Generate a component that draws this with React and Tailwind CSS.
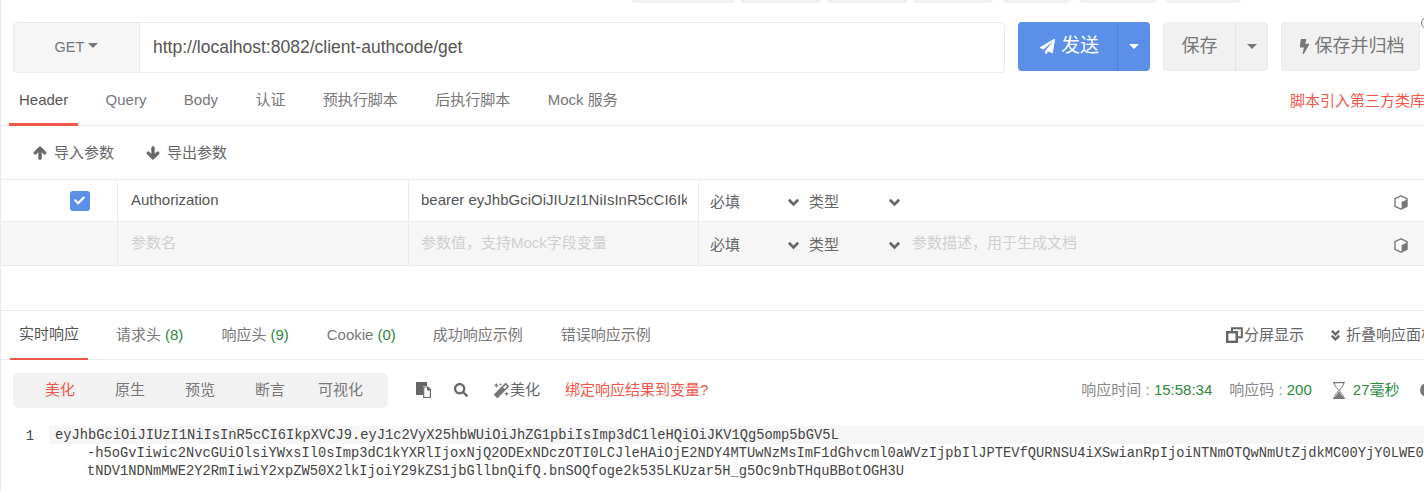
import React from "react";
import { FaPaperPlane, FaBolt, FaArrowUp, FaArrowDown, FaCheck, FaAngleDown, FaSearch, FaMagic, FaAngleDoubleDown } from "react-icons/fa";

const Caret = ({ className }) => (
  <span className={"inline-block w-0 h-0 border-x-[5px] border-x-transparent border-t-[5px] " + className} />
);

const reqTabs = ["Query", "Body", "认证", "预执行脚本", "后执行脚本", "Mock 服务"];

const Green = ({ children }) => <span className="text-[#2b8a3e]">{children}</span>;

const Cube = () => (
  <svg viewBox="0 0 14 15" className="w-[14px] h-[15px] mr-[16px] shrink-0">
    <path d="M7 .8 13 3.6v7.8L7 14.2 1 11.4V3.6Z" fill="#fff" stroke="#777" strokeWidth="1.4" strokeLinejoin="round" />
    <path d="M7.6 7 13 4.4v6.8l-5.4 2.6Z" fill="#777" />
  </svg>
);

const SplitIcon = () => (
  <svg viewBox="0 0 17 16" className="w-[17px] h-[16px] mr-[1px] shrink-0">
    <path d="M6 5V1.2h9.8v9H11" fill="none" stroke="#666" strokeWidth="2" />
    <rect x="1.2" y="5.2" width="9.6" height="9.6" fill="none" stroke="#666" strokeWidth="2.4" />
  </svg>
);

const Hourglass = () => (
  <svg viewBox="0 0 14 17" className="w-[14px] h-[17px] ml-[20px] mr-[7px] shrink-0">
    <path d="M1 .6h12M1 16.4h12" stroke="#777" strokeWidth="1.4" />
    <path d="M2.4 1c0 4 4 5.500 4 7.500S2.400 12 2.400 16M11.600 1c0 4-4 5.500-4 7.500s4 3.500 4 7.500" fill="none" stroke="#777" strokeWidth="1" />
    <path d="M7 9.500 2.400 16h9.200Z" fill="#777" />
  </svg>
);

const PasteIcon = () => (
  <svg viewBox="0 0 15 16" className="w-[15px] h-[16px] ml-[28px] shrink-0">
    <path d="M0 0h11v4H7v9H0Z" fill="#666" />
    <path d="M7.700 5H12l2.500 2.500v8H7.700Z" fill="#fff" stroke="#666" strokeWidth="1.200" />
    <path d="M11.500 5v3h3" fill="#666" stroke="#666" />
  </svg>
);

function ParamRow({ name, value, desc, placeholder, checked, shaded }) {
  const text = placeholder ? "text-[#d0d0d0]" : "text-[#555]";
  return (
    <div className={"flex border-b border-[#ebebeb] shrink-0 " + (shaded ? "h-[44px] bg-[#f6f6f6]" : "h-[42px] bg-white")}>
      <div className="w-[117px] shrink-0 border-r border-[#ebebeb] flex items-center justify-center pl-[43px]">
        {checked && (
          <span className="w-[20px] h-[20px] rounded-[3px] bg-[#5b8fe8] flex items-center justify-center text-white text-[11px] mr-[2px]">
            <FaCheck />
          </span>
        )}
      </div>
      <div className={"w-[291px] shrink-0 border-r border-[#ebebeb] pl-[13px] flex items-center " + text}>{name}</div>
      <div className={"w-[290px] shrink-0 border-r border-[#ebebeb] pl-[12px] pr-[11px] flex items-center whitespace-nowrap " + text}>
        <span className="overflow-hidden min-w-0">{value}</span>
      </div>
      <div className={"flex-1 flex items-center pl-[11px] text-[#666] " + (shaded ? "pt-[3px]" : "pt-[4px]")}>
        <span className="w-[77px]">必填</span>
        <FaAngleDown className="text-[17px] text-[#666] w-[13px] shrink-0" />
        <span className="ml-[9px] w-[79px]">类型</span>
        <FaAngleDown className="text-[17px] text-[#666] w-[13px] shrink-0" />
        <span className="ml-[11px] text-[#d0d0d0] flex-1 -mt-[3px]">{desc}</span>
        <Cube />
      </div>
    </div>
  );
}

export default function App() {
  return (
    <div
      className="w-[1424px] h-[491px] overflow-hidden bg-white border-l border-[#ebebeb] flex flex-col text-[15px] text-[#666]"
      style={{ fontFamily: '"Liberation Sans", "Noto Sans CJK SC", sans-serif' }}
    >
      {/* strip of cut-off buttons */}
      <div className="h-[3px] flex pl-[631px] shrink-0">
        <div className="w-[103px] bg-[#f1f1f1] rounded-b-[3px]" />
        <div className="w-[80px] ml-[6px] bg-[#f1f1f1] rounded-b-[3px]" />
        <div className="w-[80px] ml-[6px] bg-[#f1f1f1] rounded-b-[3px]" />
        <div className="w-[80px] ml-[6px] bg-[#f1f1f1] rounded-b-[3px]" />
        <div className="w-[67px] ml-[10px] bg-[#f1f1f1] rounded-b-[3px]" />
        <div className="w-[77px] ml-[9px] bg-[#f1f1f1] rounded-b-[3px]" />
        <div className="w-[75px] ml-[10px] bg-[#f1f1f1] rounded-b-[3px]" />
      </div>

      {/* URL bar */}
      <div className="flex mt-[19px] h-[51px] pl-[12px] shrink-0 relative">
        <div className="w-[992px] h-[51px] flex border border-[#ebebeb] rounded-[4px] overflow-hidden">
          <div className="w-[126px] bg-[#f6f6f6] border-r border-[#ebebeb] flex items-center justify-center gap-[4px] text-[14.5px] text-[#777]">
            GET <Caret className="border-t-[#777] mb-[4px]" />
          </div>
          <div className="flex-1 pl-[13px] flex items-center text-[17.5px] text-[#555]">
            http://localhost:8082/client-authcode/get
          </div>
        </div>
        <div className="ml-[13px] w-[132px] h-[49px] flex rounded-[4px] bg-[#5b8fe8] text-white">
          <div className="w-[100px] flex items-center justify-center gap-[6px] text-[19px] border-r border-[#5283d6] pl-[4px]">
            <FaPaperPlane className="text-[15px]" /> 发送
          </div>
          <div className="flex-1 flex items-center justify-center">
            <Caret className="border-t-white" />
          </div>
        </div>
        <div className="ml-[13px] w-[105px] h-[49px] flex rounded-[4px] bg-[#f1f1f1] border border-[#ebebeb] text-[#777]">
          <div className="w-[72px] flex items-center justify-center text-[18px] border-r border-[#e3e3e3]">保存</div>
          <div className="flex-1 flex items-center justify-center">
            <Caret className="border-t-[#777]" />
          </div>
        </div>
        <div className="ml-[13px] w-[139px] h-[49px] flex items-center justify-center gap-[3px] rounded-[4px] bg-[#f1f1f1] border border-[#ebebeb] text-[#777] text-[18px]">
          <FaBolt className="text-[15px]" /> 保存并归档
        </div>
        <span className="absolute left-[1420px] -top-[5px] w-[12px] h-[12px] rounded-full border border-[#777]" />
      </div>

      {/* request tabs */}
      <div className="h-[53px] border-b border-[#ebebeb] flex items-stretch pl-[8px] shrink-0 whitespace-nowrap">
        <div className="px-[10px] flex items-center text-[#555] border-b-[3px] border-[#f1574a] -mb-px pt-[5px]">Header</div>
        {reqTabs.map((t) => (
          <div key={t} className="ml-[17.4px] px-[10px] flex items-center text-[#777] pt-[3px]">{t}</div>
        ))}
        <div className="ml-auto flex items-center text-[#f1574a] -mr-[1px] pt-[5px]">脚本引入第三方类库</div>
      </div>

      {/* import/export */}
      <div className="h-[53px] flex items-center pl-[32px] pt-[1px] shrink-0 text-[#666]">
        <FaArrowUp className="text-[14px] mr-[7px] stroke-[40px]" /> 导入参数
        <FaArrowDown className="text-[14px] ml-[32px] mr-[7px] stroke-[40px]" /> 导出参数
      </div>

      {/* table */}
      <div className="border-t border-[#ebebeb] flex flex-col shrink-0">
        <ParamRow name="Authorization" value="bearer eyJhbGciOiJIUzI1NiIsInR5cCI6Ik" checked />
        <ParamRow name="参数名" value="参数值，支持Mock字段变量" desc="参数描述，用于生成文档" placeholder shaded />
      </div>

      {/* response tabs */}
      <div className="mt-[44px] h-[50px] border-t border-b border-[#ebebeb] flex items-stretch pl-[9px] shrink-0 whitespace-nowrap">
        <div className="px-[9px] flex items-center text-[#555] border-b-[2px] border-[#f1574a] -mb-px">实时响应</div>
        <div className="ml-[19px] px-[9px] flex items-center text-[#777] gap-[4px]">请求头 <Green>(8)</Green></div>
        <div className="ml-[20px] px-[9px] flex items-center text-[#777] gap-[4px]">响应头 <Green>(9)</Green></div>
        <div className="ml-[20px] px-[9px] flex items-center text-[#777] gap-[4px]">Cookie <Green>(0)</Green></div>
        <div className="ml-[19px] px-[9px] flex items-center text-[#777]">成功响应示例</div>
        <div className="ml-[20px] px-[9px] flex items-center text-[#777]">错误响应示例</div>
        <div className="ml-auto flex items-center text-[#666] -mr-[12px]">
          <SplitIcon /> 分屏显示
          <FaAngleDoubleDown className="text-[13px] ml-[25px] mr-[4px] stroke-[20px]" /> 折叠响应面板
        </div>
      </div>

      {/* response toolbar */}
      <div className="mt-[12px] flex items-center h-[36px] pl-[12px] shrink-0 whitespace-nowrap">
        <div className="w-[375px] h-[35px] shrink-0 rounded-[5px] bg-[#f2f2f2] flex items-center pl-[32px] text-[#777]">
          <span className="text-[#f1574a] w-[70px]">美化</span>
          <span className="w-[70px]">原生</span>
          <span className="w-[70px]">预览</span>
          <span className="w-[63px]">断言</span>
          <span>可视化</span>
        </div>
        <PasteIcon />
        <FaSearch className="ml-[23px] text-[14px] text-[#666] shrink-0" />
        <FaMagic className="ml-[26px] text-[15px] text-[#777] shrink-0" />
        <span className="ml-[1px] text-[#666]">美化</span>
        <span className="ml-[25px] text-[#f1574a]">绑定响应结果到变量?</span>
        <div className="ml-[373px] flex items-center text-[#888] shrink-0">
          <span>响应时间 :&nbsp;</span>
          <Green>15:58:34</Green>
          <span className="ml-[17px]">响应码 :&nbsp;</span>
          <Green>200</Green>
          <Hourglass />
          <Green>27毫秒</Green>
          <span className="ml-[20px] w-[14px] h-[14px] rounded-full bg-[#777] shrink-0" />
        </div>
      </div>

      {/* code */}
      <div
        className="mt-[18px] flex text-[13.75px] leading-[18px] text-[#444]"
        style={{ fontFamily: '"Liberation Mono", monospace' }}
      >
        <div className="w-[48px] shrink-0 text-right pr-[15px] pt-[2px]">1</div>
        <div className="flex-1 min-w-0 whitespace-nowrap overflow-hidden">
          <div className="bg-[#f6f6f6] pl-[6px] pt-[1px] h-[18px] leading-[17px]">eyJhbGciOiJIUzI1NiIsInR5cCI6IkpXVCJ9.eyJ1c2VyX25hbWUiOiJhZG1pbiIsImp3dC1leHQiOiJKV1Qg5omp5bGV5L</div>
          <div className="pl-[38px] mt-[1px]">-h5oGvIiwic2NvcGUiOlsiYWxsIl0sImp3dC1kYXRlIjoxNjQ2ODExNDczOTI0LCJleHAiOjE2NDY4MTUwNzMsImF1dGhvcml0aWVzIjpbIlJPTEVfQURNSU4iXSwianRpIjoiNTNmOTQwNmUtZjdkMC00YjY0LWE0</div>
          <div className="pl-[38px]">tNDV1NDNmMWE2Y2RmIiwiY2xpZW50X2lkIjoiY29kZS1jbGllbnQifQ.bnSOQfoge2k535LKUzar5H_g5Oc9nbTHquBBotOGH3U</div>
        </div>
      </div>
    </div>
  );
}
